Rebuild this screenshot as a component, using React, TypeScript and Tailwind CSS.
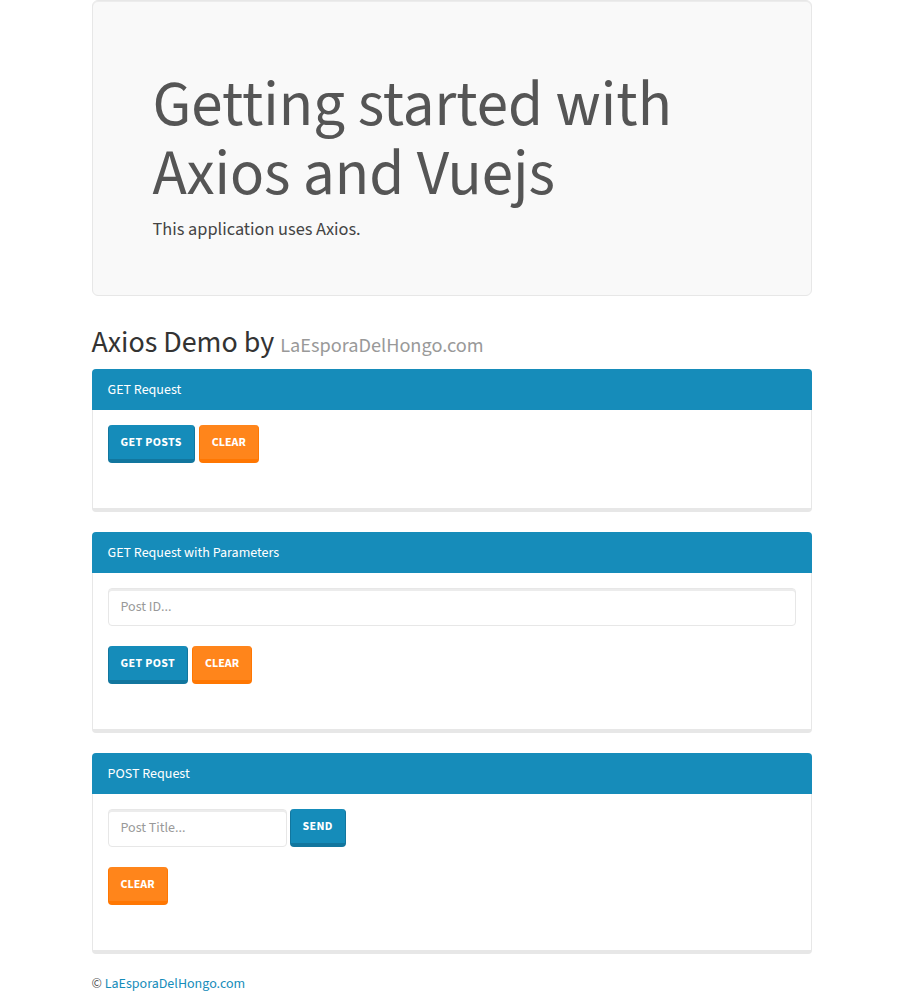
const font = { fontFamily: '"Source Sans 3", "Source Sans Pro", Lato, sans-serif' };

const Button = ({ label, kind }: { label: string; kind: 'primary' | 'warning' }) => (
  <button
    className={
      kind === 'primary'
        ? 'rounded-[4px] border-x border-b-4 border-[#12769e] bg-[#158cba] px-[12px] pt-[9px] pb-[7px] text-[12px] leading-[18px] font-bold tracking-[0.35px] uppercase text-white'
        : 'rounded-[4px] border-x border-b-4 border-[#ff7702] bg-[#ff851b] px-[12px] pt-[9px] pb-[7px] text-[12px] leading-[18px] font-bold uppercase text-white'
    }
  >
    {label}
  </button>
);

const Panel = ({ title, children }: { title: string; children: React.ReactNode }) => (
  <div className="mb-[20px]">
    <div className="flex h-[41px] items-center rounded-t-[4px] bg-[#168cba] px-[16px] text-[14px] leading-[20px] text-white">
      {title}
    </div>
    <div className="rounded-b-[4px] border-x border-b-4 border-[#e7e7e7] bg-white px-[15px] pt-[15px] pb-[45px]">
      {children}
    </div>
  </div>
);

const Input = ({ placeholder, className }: { placeholder: string; className: string }) => (
  <input
    placeholder={placeholder}
    className={
      'h-[38px] rounded-[4px] border border-[#e7e7e7] bg-white px-[12px] text-[14px] text-[#555] shadow-[inset_0_2px_0_rgba(0,0,0,0.075)] outline-none placeholder:text-[#999] ' +
      className
    }
  />
);

export default function App() {
  return (
    <div style={font} className="min-h-screen bg-white text-[14px] leading-[20px] text-[#555]">
      <div className="mx-auto w-[750px] px-[15px]">
        <div className="rounded-[6px] border border-[#e7e7e7] bg-[#f9f9f9] px-[60px] pt-[50px] pb-[56px] shadow-[inset_0_1px_0_#ececec]">
          <h1 className="mt-[20px] mb-[10px] text-[63px] leading-[69px] font-normal text-[#555]">
            Getting started with Axios and Vuejs
          </h1>
          <p className="text-[18.3px] leading-[20px] text-[#444]">This application uses Axios.</p>
        </div>

        <h2 className="mt-[30px] mb-[10px] text-[30px] leading-[33px] font-normal text-[#333]">
          Axios Demo by <small className="text-[20.3px] leading-none text-[#999]">LaEsporaDelHongo.com</small>
        </h2>

        <Panel title="GET Request">
          <div className="flex gap-[4px]">
            <Button label="Get Posts" kind="primary" />
            <Button label="Clear" kind="warning" />
          </div>
        </Panel>

        <Panel title="GET Request with Parameters">
          <Input placeholder="Post ID..." className="block w-full" />
          <div className="mt-[20px] flex gap-[4px]">
            <Button label="Get Post" kind="primary" />
            <Button label="Clear" kind="warning" />
          </div>
        </Panel>

        <Panel title="POST Request">
          <div className="flex items-start gap-[3px]">
            <Input placeholder="Post Title..." className="w-[179px]" />
            <Button label="Send" kind="primary" />
          </div>
          <div className="mt-[20px] flex">
            <Button label="Clear" kind="warning" />
          </div>
        </Panel>

        <p className="pb-[10px]">
          © <a className="text-[#158cba]">LaEsporaDelHongo.com</a>
        </p>
      </div>
    </div>
  );
}
